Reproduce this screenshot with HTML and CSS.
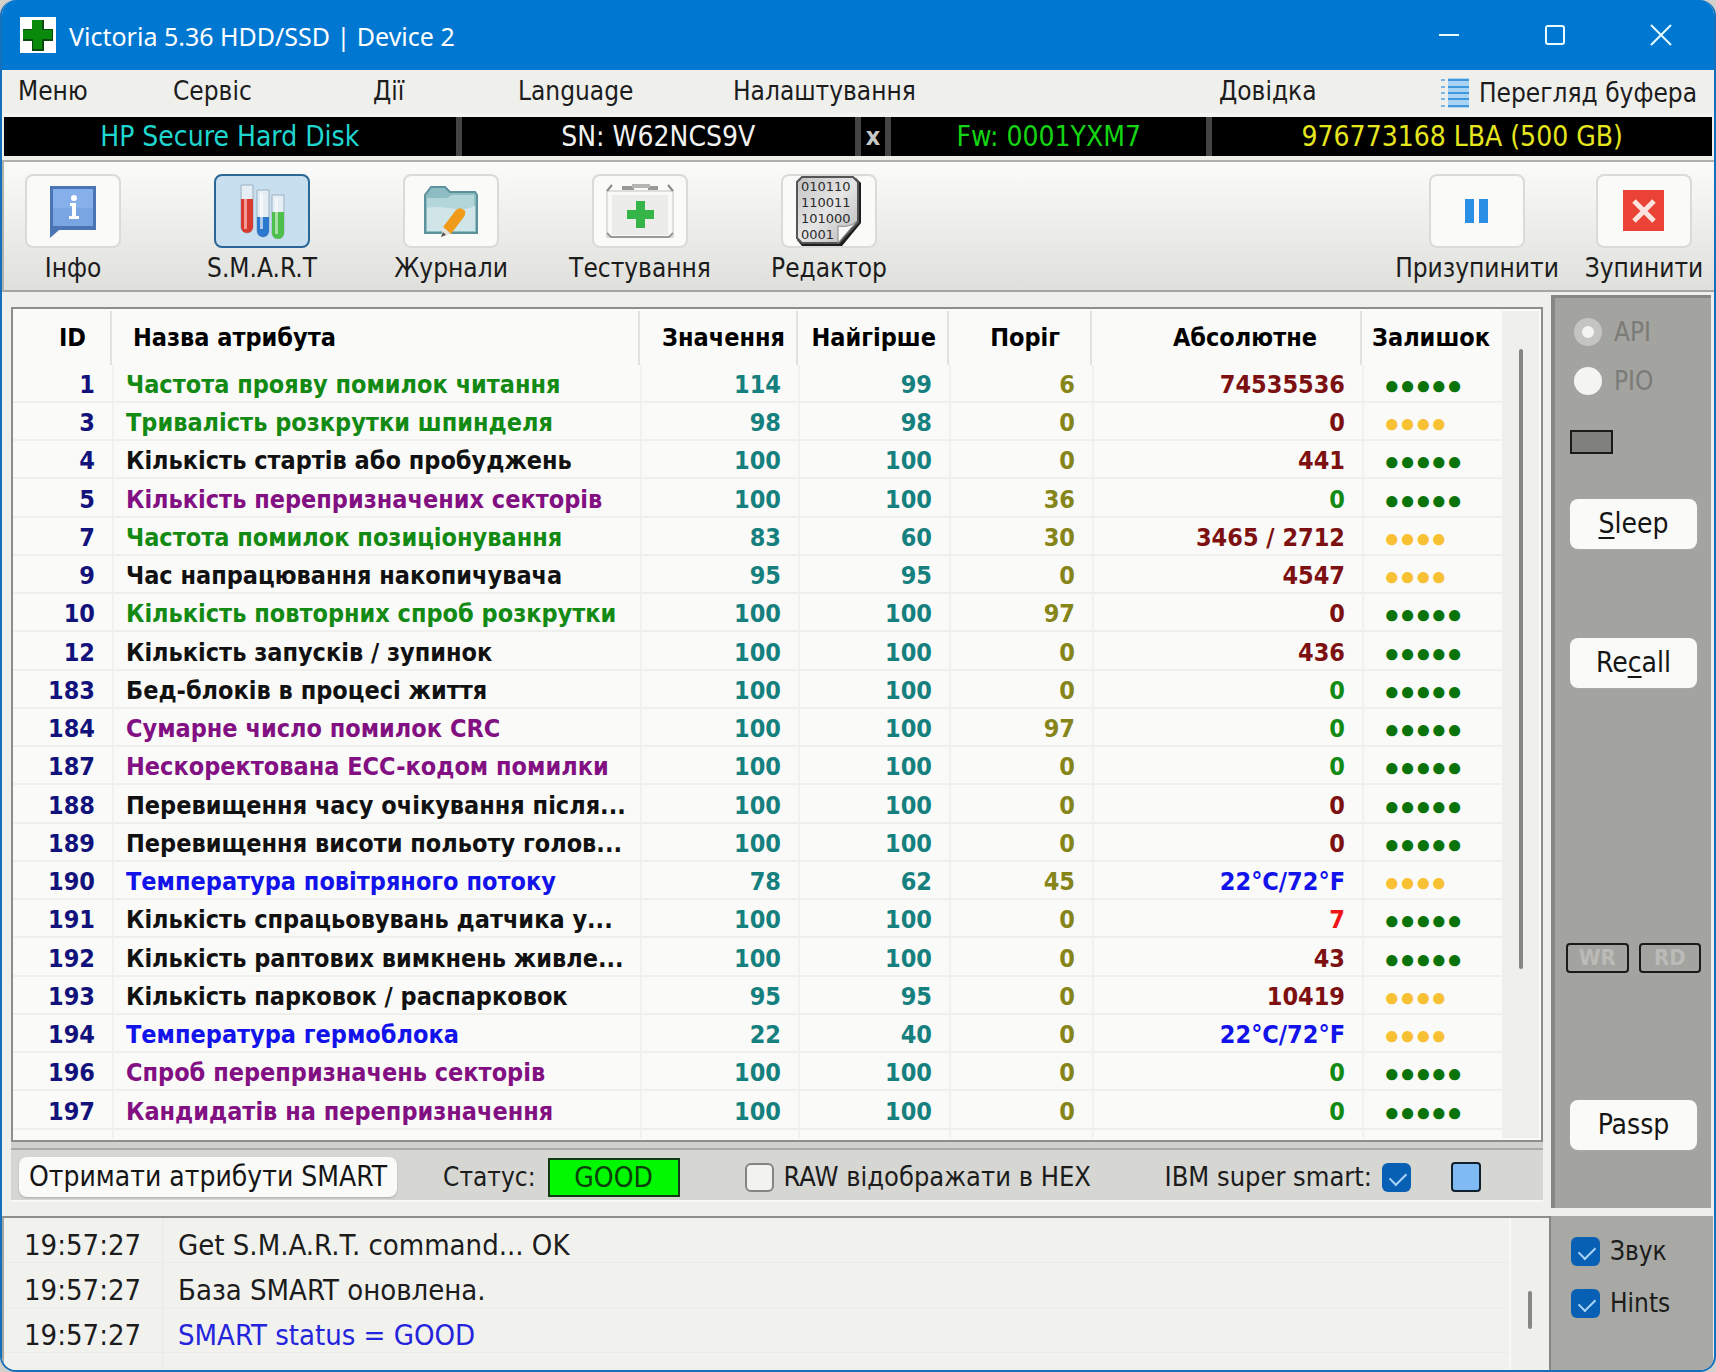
FILE: index.html
```html
<!DOCTYPE html>
<html lang="uk">
<head>
  <meta charset="UTF-8" />
  <title>Victoria 5.36 HDD/SSD | Device 2</title>
  <meta name="viewport" content="width=device-width, initial-scale=1.0" />
  <link rel="stylesheet" href="styles.css">
</head>
<body>
  <div class="window">
    <header class="titlebar">
      <svg class="app-icon" viewBox="0 0 36 36" width="36" height="36">
        <rect width="36" height="36" fill="#fff"/>
        <path d="M12 3h12v9h9v12h-9v10H12V24H3V12h9z" fill="#0a4a10"/>
        <path d="M12 3h10v10h10v9H22v10H13V22H3v-9h9z" fill="#0a8a0a"/>
      </svg>
      <h1>Victoria 5.36 HDD/SSD | Device 2</h1>
      <div class="window-buttons">
        <button aria-label="Minimize"><svg viewBox="0 0 22 22" width="22" height="22"><path d="M1 11h20"/></svg></button>
        <button aria-label="Maximize"><svg viewBox="0 0 22 22" width="22" height="22"><rect x="2" y="2" width="18" height="18" rx="2"/></svg></button>
        <button aria-label="Close"><svg viewBox="0 0 22 22" width="22" height="22"><path d="M1 1l20 20M21 1L1 21"/></svg></button>
      </div>
    </header>

    <nav class="menu">
      <button>Меню</button>
      <button>Сервіс</button>
      <button>Дії</button>
      <button>Language</button>
      <button>Налаштування</button>
      <button>Довідка</button>
      <button class="buffer">
        <svg viewBox="0 0 28 30" width="28" height="30">
          <path d="M7 3h21M7 9h21M7 15h21M7 21h21M7 27h21" stroke="#a9d4f5" stroke-width="6"/>
          <path d="M7 2h21M7 9h21M7 15h21M7 21h21M7 28h21" stroke="#3f97dc" stroke-width="2"/>
          <path d="M0 2h4M0 9h4M0 15h4M0 21h4M0 28h4" stroke="#7bb8e8" stroke-width="2"/>
        </svg>
        Перегляд буфера
      </button>
    </nav>

    <div class="device">
      <span class="cyan">HP Secure Hard Disk</span>
      <span class="white">SN: W62NCS9V</span>
      <button class="close-device">x</button>
      <span class="lime">Fw: 0001YXM7</span>
      <span class="yellow">976773168 LBA (500 GB)</span>
    </div>

    <div class="toolbar">
      <button class="tool">
        <span class="tool-icon">
          <svg viewBox="0 0 52 56" width="52" height="56">
            <path d="M3 3h46v44H12l-9 8z" fill="#4a74b4"/>
            <path d="M6 6h40v37H6z" fill="#86b0ea"/>
            <path d="M6 25h40v18H6z" fill="#79a5e2"/>
            <circle cx="27" cy="15" r="3" fill="#fff"/>
            <path d="M23 20h6v13h3v3H22v-3h3V23h-2z" fill="#fff"/>
          </svg>
        </span>
        Інфо
      </button>
      <button class="tool active">
        <span class="tool-icon">
          <svg viewBox="0 0 48 56" width="48" height="56">
            <path d="M3 2h12v42a6 6 0 0 1-12 0z" fill="#e6eef5" stroke="#9cafc0"/>
            <path d="M3 16h12v28a6 6 0 0 1-12 0z" fill="#d93a30"/>
            <path d="M6 16h3v30H6z" fill="#f49a92"/>
            <path d="M19 7h12v41a6 6 0 0 1-12 0z" fill="#e6eef5" stroke="#9cafc0"/>
            <path d="M19 34h12v14a6 6 0 0 1-12 0z" fill="#2c78cc"/>
            <path d="M22 10h3v36h-3z" fill="#fff" opacity=".6"/>
            <path d="M34 12h12v38a6 6 0 0 1-12 0z" fill="#e6eef5" stroke="#9cafc0"/>
            <path d="M34 29h12v21a6 6 0 0 1-12 0z" fill="#4cc04a"/>
            <path d="M37 15h3v36h-3z" fill="#fff" opacity=".5"/>
          </svg>
        </span>
        S.M.A.R.T
      </button>
      <button class="tool">
        <span class="tool-icon">
          <svg viewBox="0 0 58 56" width="58" height="56">
            <path d="M3 12l6-8h14l5 5h25l2 3v38H3z" fill="#8ebcc3" stroke="#5b929c" stroke-width="2"/>
            <path d="M5 15h20l5-3h22v36H5z" fill="#b3d6da"/>
            <path d="M5 25c18-4 30 6 48-2v25H5z" fill="#cfe5e7"/>
            <path d="M21 44l13-17q5-4 9 1 1 4-2 7L29 51z" fill="#f09a1a"/>
            <path d="M21 44l8 7-10 3z" fill="#e8e3da"/>
            <path d="M19 54l2-5 3 3z" fill="#555"/>
          </svg>
        </span>
        Журнали
      </button>
      <button class="tool">
        <span class="tool-icon">
          <svg viewBox="0 0 68 56" width="68" height="56">
            <rect x="1" y="8" width="66" height="46" fill="#f9f9f7" stroke="#dededb" stroke-width="2"/>
            <rect x="6" y="12" width="56" height="40" fill="#ececea"/>
            <path d="M1 8l5-6M67 8l-5-6" stroke="#888" stroke-width="2"/>
            <path d="M16 5h12M42 5h10" stroke="#999" stroke-width="4"/>
            <path d="M26 3h18" stroke="#b5b5b2" stroke-width="4"/>
            <path d="M1 50l4 4h58l4-4" fill="none" stroke="#999996" stroke-width="2"/>
            <path d="M30 18h9v9h9v9h-9v9h-9v-9h-9v-9h9z" fill="#35b548"/>
          </svg>
        </span>
        Тестування
      </button>
      <button class="tool">
        <span class="tool-icon">
          <svg viewBox="0 0 68 72" width="68" height="72">
            <defs>
              <linearGradient id="page" x1="0" y1="0" x2="1" y2="1">
                <stop offset="0" stop-color="#c2c2c2"/>
                <stop offset=".5" stop-color="#e6e6e6"/>
                <stop offset="1" stop-color="#b5b5b5"/>
              </linearGradient>
            </defs>
            <path d="M7 3h54l5 5v40L47 71H7l-5-6V8z" fill="#1d1d1d"/>
            <path d="M7 2h51l5 5v40L44 68H7l-5-5V7z" fill="url(#page)" stroke="#555" stroke-width="2"/>
            <path d="M43 68V51q12 2 19-5z" fill="#f8f8f8" stroke="#888"/>
            <g class="bits">
              <text x="6" y="16">010110</text>
              <text x="6" y="32">110011</text>
              <text x="6" y="48">101000</text>
              <text x="6" y="64">0001</text>
            </g>
          </svg>
        </span>
        Редактор
      </button>
      <span class="spacer"></span>
      <div class="run-tools">
        <button class="tool">
          <span class="tool-icon">
            <svg viewBox="0 0 24 24" width="24" height="24"><path d="M0 0h9v24H0zM14 0h9v24h-9z" fill="#2b8fe6"/></svg>
          </span>
          Призупинити
        </button>
        <button class="tool">
          <span class="tool-icon">
            <svg viewBox="0 0 42 42" width="42" height="42">
              <rect width="41" height="41" fill="#ea4335"/>
              <path d="M11 11l20 20M31 11L11 31" stroke="#fbe3e0" stroke-width="5"/>
            </svg>
          </span>
          Зупинити
        </button>
      </div>
    </div>

    <div class="main">
      <section class="smart">
        <div class="table-frame">
          <table class="attributes">
            <colgroup>
              <col class="c-id"><col class="c-name"><col class="c-value"><col class="c-worst"><col class="c-limit"><col class="c-raw"><col class="c-health">
            </colgroup>
            <thead>
              <tr><th>ID</th><th>Назва атрибута</th><th>Значення</th><th>Найгірше</th><th>Поріг</th><th>Абсолютне</th><th>Залишок</th></tr>
            </thead>
            <tbody>
              <tr><td>1</td><td class="green">Частота прояву помилок читання</td><td>114</td><td>99</td><td>6</td><td>74535536</td><td>●●●●●</td></tr>
              <tr><td>3</td><td class="green">Тривалість розкрутки шпинделя</td><td>98</td><td>98</td><td>0</td><td>0</td><td class="warn">●●●●</td></tr>
              <tr><td>4</td><td>Кількість стартів або пробуджень</td><td>100</td><td>100</td><td>0</td><td>441</td><td>●●●●●</td></tr>
              <tr><td>5</td><td class="purple">Кількість перепризначених секторів</td><td>100</td><td>100</td><td>36</td><td class="green">0</td><td>●●●●●</td></tr>
              <tr><td>7</td><td class="green">Частота помилок позиціонування</td><td>83</td><td>60</td><td>30</td><td>3465 / 2712</td><td class="warn">●●●●</td></tr>
              <tr><td>9</td><td>Час напрацювання накопичувача</td><td>95</td><td>95</td><td>0</td><td>4547</td><td class="warn">●●●●</td></tr>
              <tr><td>10</td><td class="green">Кількість повторних спроб розкрутки</td><td>100</td><td>100</td><td>97</td><td>0</td><td>●●●●●</td></tr>
              <tr><td>12</td><td>Кількість запусків / зупинок</td><td>100</td><td>100</td><td>0</td><td>436</td><td>●●●●●</td></tr>
              <tr><td>183</td><td>Бед-блоків в процесі життя</td><td>100</td><td>100</td><td>0</td><td class="green">0</td><td>●●●●●</td></tr>
              <tr><td>184</td><td class="purple">Сумарне число помилок CRC</td><td>100</td><td>100</td><td>97</td><td class="green">0</td><td>●●●●●</td></tr>
              <tr><td>187</td><td class="purple">Нескоректована ECC-кодом помилки</td><td>100</td><td>100</td><td>0</td><td class="green">0</td><td>●●●●●</td></tr>
              <tr><td>188</td><td>Перевищення часу очікування після...</td><td>100</td><td>100</td><td>0</td><td>0</td><td>●●●●●</td></tr>
              <tr><td>189</td><td>Перевищення висоти польоту голов...</td><td>100</td><td>100</td><td>0</td><td>0</td><td>●●●●●</td></tr>
              <tr><td>190</td><td class="blue">Температура повітряного потоку</td><td>78</td><td>62</td><td>45</td><td class="blue">22°C/72°F</td><td class="warn">●●●●</td></tr>
              <tr><td>191</td><td>Кількість спрацьовувань датчика у...</td><td>100</td><td>100</td><td>0</td><td class="red">7</td><td>●●●●●</td></tr>
              <tr><td>192</td><td>Кількість раптових вимкнень живле...</td><td>100</td><td>100</td><td>0</td><td>43</td><td>●●●●●</td></tr>
              <tr><td>193</td><td>Кількість парковок / распарковок</td><td>95</td><td>95</td><td>0</td><td>10419</td><td class="warn">●●●●</td></tr>
              <tr><td>194</td><td class="blue">Температура гермоблока</td><td>22</td><td>40</td><td>0</td><td class="blue">22°C/72°F</td><td class="warn">●●●●</td></tr>
              <tr><td>196</td><td class="purple">Спроб перепризначень секторів</td><td>100</td><td>100</td><td>0</td><td class="green">0</td><td>●●●●●</td></tr>
              <tr><td>197</td><td class="purple">Кандидатів на перепризначення</td><td>100</td><td>100</td><td>0</td><td class="green">0</td><td>●●●●●</td></tr>
              <tr class="rest"><td></td><td></td><td></td><td></td><td></td><td></td><td></td></tr>
            </tbody>
          </table>
          <div class="scroll"><span class="thumb"></span></div>
        </div>

        <div class="smart-bar">
          <button class="btn get-smart">Отримати атрибути SMART</button>
          <span class="status-label">Статус:</span>
          <output class="status">GOOD</output>
          <label class="check hex"><input type="checkbox"> RAW відображати в HEX</label>
          <label class="check">IBM super smart: <input type="checkbox" checked></label>
          <button class="color-box" aria-label="Колір"></button>
        </div>
      </section>

      <aside class="side">
        <label class="radio"><input type="radio" name="mode" disabled checked> API</label>
        <label class="radio"><input type="radio" name="mode" disabled> PIO</label>
        <div class="led"></div>
        <button class="btn sleep"><u>S</u>leep</button>
        <button class="btn recall">Re<u>c</u>all</button>
        <div class="leds"><span>WR</span><span>RD</span></div>
        <button class="btn passp">Passp</button>
      </aside>
    </div>

    <footer class="bottom">
      <div class="log">
        <table class="log-table">
          <colgroup><col class="c-time"><col></colgroup>
          <tbody>
            <tr><td>19:57:27</td><td>Get S.M.A.R.T. command... OK</td></tr>
            <tr><td>19:57:27</td><td>База SMART оновлена.</td></tr>
            <tr><td>19:57:27</td><td class="blue">SMART status = GOOD</td></tr>
            <tr class="rest"><td></td><td></td></tr>
          </tbody>
        </table>
        <div class="scroll"><span class="thumb"></span></div>
      </div>
      <div class="options">
        <label class="check"><input type="checkbox" checked> Звук</label>
        <label class="check"><input type="checkbox" checked> Hints</label>
      </div>
    </footer>
  </div>
</body>
</html>
```

FILE: styles.css
```css
* {
  box-sizing: border-box;
}

body {
  margin: 0;
  background: #d3cfca;
  color: #1c1c1c;
  font-family: "DejaVu Sans Condensed", "DejaVu Sans", sans-serif;
  font-size: 26px;
  line-height: 32px;
}

button {
  font: inherit;
  color: inherit;
  border: none;
  background: none;
  padding: 0;
  cursor: pointer;
}

.window {
  display: flex;
  flex-direction: column;
  min-height: 100vh;
  border: 2px solid #1470ba;
  border-top: none;
  border-radius: 16px;
  background: #efefec;
  overflow: hidden;
}

/* title */
.titlebar {
  display: flex;
  align-items: center;
  height: 70px;
  padding-left: 18px;
  background: #0078d2;
  color: white;
}

.titlebar h1 {
  flex: 1;
  margin: 2px 0 0 13px;
  font-family: "Noto Sans", sans-serif;
  font-size: 25px;
  font-weight: normal;
}

.window-buttons {
  display: flex;
}

.window-buttons button {
  width: 106px;
  height: 70px;
  padding-bottom: 4px;
}

.window-buttons svg {
  vertical-align: middle;
  fill: none;
  stroke: #e8fbff;
  stroke-width: 2;
}

/* menu */
.menu {
  display: grid;
  grid-template-columns: 155px 200px 145px 215px 1fr 222px auto;
  align-items: center;
  height: 47px;
  padding: 0 17px 0 16px;
  border-bottom: 4px solid #f4f4f2;
}

.menu button {
  text-align: left;
  padding-bottom: 2px;
  white-space: nowrap;
}

.menu .buffer {
  display: flex;
  align-items: center;
  gap: 10px;
  padding: 2px 0 0;
}

/* device line */
.device {
  display: grid;
  grid-template-columns: 451fr 393fr 24px 315fr 499fr;
  gap: 6px;
  height: 39px;
  margin: 0 2px;
  background: #444;
  font-size: 28px;
  line-height: 39px;
  text-align: center;
}

.device > * {
  background: black;
  white-space: nowrap;
}

.cyan { color: #1fd6cf; }
.white { color: #f2f2f2; }
.lime { color: #14d414; }
.yellow { color: #e6e61e; }

.device .close-device {
  color: #c8c8c8;
  font-weight: bold;
  font-size: 25px;
}

/* toolbar */
.toolbar {
  display: flex;
  gap: 53px;
  height: 132px;
  margin-top: 4px;
  padding: 12px 2px 0 1px;
  border-top: 2px solid #b0b0ac;
  border-bottom: 2px solid #a5a5a1;
  border-left: 2px solid #b0b0ac;
  background: linear-gradient(#fbfbf9, #dfdfdc);
}

.tool {
  display: flex;
  flex-direction: column;
  align-items: center;
  gap: 4px;
  width: 136px;
  white-space: nowrap;
}

.tool-icon {
  display: flex;
  align-items: center;
  justify-content: center;
  width: 96px;
  height: 74px;
  border: 2px solid #dadad7;
  border-radius: 8px;
  background: #fafaf8;
}

.tool.active .tool-icon {
  border-color: #2a6796;
  background: #c8dff0;
}

.bits {
  font-family: "DejaVu Sans", sans-serif;
  font-size: 13px;
  fill: #2c2c2c;
}

.spacer {
  flex: 1;
}

.run-tools {
  display: flex;
  gap: 31px;
}

/* main area */
.main {
  display: flex;
  flex: 1;
  gap: 8px;
  padding: 3px 3px 8px 9px;
}

.smart {
  flex: 1;
  padding-top: 12px;
}

.table-frame {
  display: flex;
  border: 2px solid #8d8d89;
  background: #fafaf8;
  padding: 2px 2px 2px 0;
}

.attributes {
  flex: 1;
  table-layout: fixed;
  border-collapse: separate;
  border-spacing: 0;
  font-size: 25px;
  font-weight: bold;
}

.c-id { width: 101px; }
.c-value { width: 158px; }
.c-worst { width: 151px; }
.c-limit { width: 143px; }
.c-raw { width: 270px; }
.c-health { width: 138px; }

.attributes th {
  height: 54px;
  padding: 0 15px 0 0;
  color: black;
  text-align: right;
  background: linear-gradient(#e2e2df, #e2e2df) no-repeat right 2px top / 2px 100%;
}

.attributes th:first-child { padding-right: 28px; }
.attributes th:nth-child(2) { padding-left: 19px; text-align: left; }
.attributes th:nth-child(5) { padding-right: 34px; }
.attributes th:nth-child(6) { padding-right: 47px; }
.attributes th:last-child { padding-right: 12px; background: none; }

.attributes td {
  height: 38px;
  padding: 4px 17px 0 0;
  border-bottom: 2px solid #efefec;
  border-right: 2px solid #f1f1ee;
  line-height: 30px;
  text-align: right;
  white-space: nowrap;
}

.attributes tr:nth-child(4n) td {
  height: 39px;
}

.attributes td:nth-child(1) { color: #12127c; }
.attributes td:nth-child(2) { color: #111; padding-left: 12px; padding-right: 0; text-align: left; }
.attributes td:nth-child(3),
.attributes td:nth-child(4) { color: #15807e; }
.attributes td:nth-child(5) { color: #85851a; }
.attributes td:nth-child(6) { color: #7d1010; }
.attributes td:nth-child(7) {
  color: #0a730a;
  padding-left: 20px;
  padding-right: 0;
  border-right: none;
  font-family: "Liberation Sans", sans-serif;
  font-size: 26px;
  font-weight: normal;
  text-align: left;
}

.attributes td.green { color: #138a13; }
.attributes td.purple { color: #821082; }
.attributes td.blue { color: #1212ea; }
.attributes td.red { color: #ee1515; }
.attributes td.warn { color: #f8c033; }

.attributes .rest td {
  height: 8px;
  border-bottom: none;
}

.scroll {
  display: flex;
  justify-content: center;
  width: 37px;
  background: #efefec;
}

.thumb {
  width: 4px;
  border-radius: 2px;
  background: #868682;
}

.table-frame .scroll .thumb {
  height: 620px;
  margin-top: 38px;
}

.smart-bar {
  display: flex;
  align-items: center;
  height: 60px;
  padding: 12px 62px 0 8px;
  background: #d6d6d2;
  border-bottom: 2px solid #f8f8f6;
  box-shadow: inset 0 6px #d0d0cc, inset 0 8px #aaaaa6;
}

.btn {
  border-radius: 8px;
  background: #fafaf8;
  box-shadow: 0 1px 2px #aaaaa6;
  color: #151515;
  font-size: 28px;
}

.get-smart {
  height: 40px;
  padding: 0 10px;
}

.status-label {
  margin: 0 12px 0 46px;
}

.status {
  width: 132px;
  height: 39px;
  border: 2px solid #123a12;
  background: #00f800;
  font-size: 28px;
  line-height: 35px;
  text-align: center;
  color: #0b400b;
}

.check {
  display: flex;
  align-items: center;
  gap: 10px;
  white-space: nowrap;
}

.smart-bar .check {
  font-size: 27px;
}

.hex {
  margin: 0 auto 0 65px;
}

input {
  appearance: none;
  flex: none;
  width: 29px;
  height: 29px;
  margin: 0;
}

input[type="checkbox"] {
  border: 2px solid #848480;
  border-radius: 6px;
  background: #f2f2ef;
}

input[type="checkbox"]:checked {
  border: none;
  background: #0860b4;
}

input[type="checkbox"]:checked::before {
  content: "";
  display: block;
  width: 14px;
  height: 8px;
  margin: 9px 0 0 8px;
  border-left: 2px solid #a9d4f5;
  border-bottom: 2px solid #a9d4f5;
  transform: rotate(-45deg);
}

.color-box {
  width: 30px;
  height: 30px;
  margin-left: 40px;
  border: 2px solid #10202c;
  border-radius: 4px;
  background: #7fbaf4;
}

/* right panel */
.side {
  display: flex;
  flex-direction: column;
  width: 160px;
  padding: 17px 14px 0 15px;
  border-left: 4px solid #868682;
  border-top: 3px solid #868682;
  background: #a3a39f;
}

.radio {
  display: flex;
  align-items: center;
  gap: 12px;
  height: 34px;
  margin-bottom: 15px;
  padding-left: 4px;
  color: #7b7b77;
}

.radio input {
  width: 28px;
  height: 28px;
  border-radius: 50%;
  background: #f4f4f2;
}

.radio input:checked {
  border: 8px solid #c4c4c0;
}

.led {
  width: 43px;
  height: 24px;
  margin: 17px 0 45px 0;
  border: 2px solid #1a1a1a;
  background: #80807c;
}

.side .btn {
  flex: none;
  width: 127px;
  height: 50px;
}

.side u {
  text-underline-offset: 4px;
  text-decoration-thickness: 2px;
}

.recall {
  margin-top: 89px;
}

.leds {
  display: flex;
  gap: 10px;
  margin: 255px -4px 127px;
}

.leds span {
  flex: 1;
  height: 30px;
  border: 2px solid #1a1a1a;
  border-radius: 4px;
  color: #bbbbb7;
  font-size: 22px;
  font-weight: bold;
  line-height: 26px;
  text-align: center;
}

/* log */
.bottom {
  display: flex;
  padding-right: 1px;
}

.log {
  display: flex;
  flex: 1;
  border-top: 2px solid #8d8d89;
  border-left: 2px solid #a5a5a1;
  background: #f1f1ee;
  font-size: 29px;
}

.log-table {
  flex: 1;
  table-layout: fixed;
  border-collapse: separate;
  border-spacing: 0;
}

.c-time { width: 160px; }

.log-table td {
  height: 45px;
  padding: 10px 0 0 14px;
  border-bottom: 1px solid #ebebe8;
}

.log-table td:first-child {
  padding-left: 20px;
  border-right: 2px solid #ededea;
}

.log-table .blue {
  color: #2424dc;
}

.log-table .rest td {
  height: 17px;
  border-bottom: none;
}

.log .scroll {
  border-left: 2px solid #f8f8f6;
  width: 40px;
}

.log .thumb {
  height: 38px;
  margin-top: 73px;
}

.options {
  display: flex;
  flex-direction: column;
  gap: 20px;
  width: 164px;
  padding: 19px 0 0 20px;
  border-left: 2px solid #868682;
  background: #a8a8a4;
}
```
